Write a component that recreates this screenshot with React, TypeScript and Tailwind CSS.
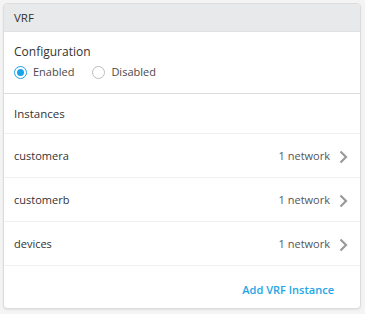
import React from 'react';

const instances = [
    { name: 'customera', count: '1 network' },
    { name: 'customerb', count: '1 network' },
    { name: 'devices', count: '1 network' },
];

const Chevron = () => (
    <svg width="9" height="14" viewBox="0 0 9 14" className="ml-[9px]">
        <path d="M1.5 1.5 L7 7 L1.5 12.5" fill="none" stroke="#9a9a9a" strokeWidth="2.2" />
    </svg>
);

const Radio = ({ checked, label }: { checked?: boolean; label: string }) => (
    <label className="flex items-center gap-[6px]">
        <span
            className={
                checked
                    ? 'w-[13px] h-[13px] rounded-full border border-[#1aa3e8] flex items-center justify-center bg-white'
                    : 'w-[13px] h-[13px] rounded-full border border-[#bdbdbd] bg-white'
            }
        >
            {checked && <span className="w-[7px] h-[7px] rounded-full bg-[#1aa3e8]" />}
        </span>
        <span className="text-[11px] text-[#4a4a4a]">{label}</span>
    </label>
);

const App = () => {
    return (
        <div className="w-[365px] h-[314px] bg-[#f4f4f5] pt-[3px] pl-[3px] pr-[4px] pb-[5px] font-['Open_Sans',sans-serif]">
            <div className="h-full bg-white border border-[#dcdcdc] rounded-[4px] shadow-[0_1px_2px_rgba(0,0,0,0.08)] flex flex-col overflow-hidden">
                {/* Header */}
                <div className="h-[28px] shrink-0 bg-[#e8e9eb] border-b border-[#e1e1e1] px-[10px] flex items-center">
                    <span className="text-[11.5px] text-[#333]">VRF</span>
                </div>

                {/* Configuration */}
                <div className="h-[62px] shrink-0 px-[10px] pt-[11px] border-b border-[#dedede]">
                    <div className="text-[12px] text-[#333] leading-[18px]">Configuration</div>
                    <div className="flex items-center gap-[18px] mt-[3px]">
                        <Radio checked label="Enabled" />
                        <Radio label="Disabled" />
                    </div>
                </div>

                {/* Instances */}
                <div className="h-[40px] shrink-0 px-[10px] flex items-center border-b border-[#f0f0f0]">
                    <span className="text-[11.5px] text-[#333]">Instances</span>
                </div>
                {instances.map((it) => (
                    <div
                        key={it.name}
                        className="h-[44px] shrink-0 pl-[10px] pr-[12px] pt-[2px] flex items-center justify-between border-b border-[#f0f0f0]"
                    >
                        <span className="text-[11px] text-[#333]">{it.name}</span>
                        <span className="flex items-center text-[11px] text-[#555]">
                            {it.count}
                            <Chevron />
                        </span>
                    </div>
                ))}

                <div className="flex-1 flex items-center justify-end pr-[26px] pt-[6px]">
                    <span className="text-[11px] font-semibold text-[#1ea6e6]">Add VRF Instance</span>
                </div>
            </div>
        </div>
    );
};

export default App;
